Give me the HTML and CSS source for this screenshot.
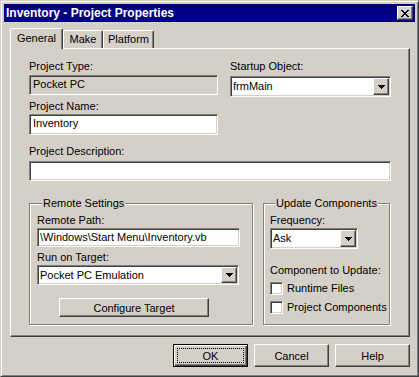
FILE: index.html
```html
<!DOCTYPE html>
<html lang="en">
<head>
    <meta charset="UTF-8">
    <meta name="viewport" content="width=device-width, initial-scale=1.0">
    <title>Inventory - Project Properties</title>
    <link rel="stylesheet" href="styles.css">
</head>
<body>
    <div class="window">
        <div class="title-bar">
            <span class="title-text">Inventory - Project Properties</span>
            <div class="close-btn raised">
                <svg width="8" height="7" viewBox="0 0 8 7" shape-rendering="crispEdges">
                    <path d="M0 0h2v1H0zM6 0h2v1H6zM1 1h2v1H1zM5 1h2v1H5zM2 2h4v1H2zM3 3h2v1H3zM2 4h4v1H2zM1 5h2v1H1zM5 5h2v1H5zM0 6h2v1H0zM6 6h2v1H6z" fill="#000"/>
                </svg>
            </div>
        </div>

        <div class="tabs">
            <div class="tab tab-general active">General</div>
            <div class="tab tab-make">Make</div>
            <div class="tab tab-platform">Platform</div>
        </div>

        <div class="panel">
            <div class="top-row">
                <div class="col-left">
                    <div class="label">Project Type:</div>
                    <div class="field readonly first-field">Pocket PC</div>
                    <div class="label name-label">Project Name:</div>
                    <div class="field name-field">Inventory</div>
                </div>
                <div class="col-right">
                    <div class="label">Startup Object:</div>
                    <div class="combo startup-combo">
                        <span class="combo-text">frmMain</span>
                        <span class="drop-btn raised">
                            <svg width="7" height="4" viewBox="0 0 7 4" shape-rendering="crispEdges"><path d="M0 0h7v1H0zM1 1h5v1H1zM2 2h3v1H2zM3 3h1v1H3z" fill="#000"/></svg>
                        </span>
                    </div>
                </div>
            </div>

            <div class="label desc-label">Project Description:</div>
            <div class="field desc-field"></div>

            <div class="groups">
                <fieldset class="group remote-group">
                    <legend>Remote Settings</legend>
                    <div class="label">Remote Path:</div>
                    <div class="field path-field">\Windows\Start Menu\Inventory.vb</div>
                    <div class="label spaced">Run on Target:</div>
                    <div class="combo target-combo">
                        <span class="combo-text">Pocket PC Emulation</span>
                        <span class="drop-btn raised">
                            <svg width="7" height="4" viewBox="0 0 7 4" shape-rendering="crispEdges"><path d="M0 0h7v1H0zM1 1h5v1H1zM2 2h3v1H2zM3 3h1v1H3z" fill="#000"/></svg>
                        </span>
                    </div>
                    <div class="button raised configure-btn">Configure Target</div>
                </fieldset>

                <fieldset class="group update-group">
                    <legend>Update Components</legend>
                    <div class="label">Frequency:</div>
                    <div class="combo freq-combo">
                        <span class="combo-text">Ask</span>
                        <span class="drop-btn raised">
                            <svg width="7" height="4" viewBox="0 0 7 4" shape-rendering="crispEdges"><path d="M0 0h7v1H0zM1 1h5v1H1zM2 2h3v1H2zM3 3h1v1H3z" fill="#000"/></svg>
                        </span>
                    </div>
                    <div class="label component-label">Component to Update:</div>
                    <div class="check-row first-check"><span class="checkbox"></span>Runtime Files</div>
                    <div class="check-row"><span class="checkbox"></span>Project Components</div>
                </fieldset>
            </div>
        </div>

        <div class="dialog-buttons">
            <div class="button default-btn"><span class="focus">OK</span></div>
            <div class="button raised">Cancel</div>
            <div class="button raised">Help</div>
        </div>
    </div>
</body>
</html>
```

FILE: styles.css
```css
/* Global Reset */
* {
    margin: 0;
    padding: 0;
    box-sizing: border-box;
}

body {
    font-family: 'Liberation Sans', Arial, sans-serif;
    font-size: 11px;
    color: #000;
    background: #d4d0c8;
}

/* Window frame */
.window {
    width: 419px;
    height: 377px;
    background: #d4d0c8;
    border: 1px solid;
    border-color: #d4d0c8 #404040 #404040 #d4d0c8;
    box-shadow: inset 1px 1px #fff, inset -1px -1px #808080;
    padding: 3px;
    display: flex;
    flex-direction: column;
}

.title-bar {
    height: 18px;
    background: #000080;
    color: #fff;
    display: flex;
    align-items: center;
    justify-content: space-between;
    padding: 0 2px;
}

.title-text {
    font-weight: bold;
    font-size: 12px;
}

/* 3D raised look shared by buttons */
.raised {
    background: #d4d0c8;
    border: 1px solid;
    border-color: #fff #404040 #404040 #fff;
    box-shadow: inset -1px -1px #808080;
}

.close-btn {
    width: 16px;
    height: 14px;
    display: flex;
    align-items: center;
    justify-content: center;
}

/* Tabs */
.tabs {
    display: flex;
    align-items: flex-end;
    margin: 6px 5px 0 6px;
    height: 20px;
}

.tab {
    height: 18px;
    line-height: 13px;
    padding-top: 2px;
    text-align: center;
    border-top: 1px solid #fff;
    border-left: 1px solid #fff;
    border-right: 1px solid #404040;
    box-shadow: inset -1px 0 #808080;
    border-radius: 2px 2px 0 0;
    background: #d4d0c8;
}

.tab.active {
    height: 21px;
    margin-bottom: -1px;
    padding-top: 3px;
    position: relative;
    z-index: 1;
}

.tab-general { width: 53px; }
.tab-make { width: 40px; }
.tab-platform { width: 51px; }

/* Tab page */
.panel {
    height: 289px;
    margin: 0 5px 0 6px;
    border: 1px solid;
    border-color: #fff #404040 #404040 #fff;
    box-shadow: inset -1px -1px #808080;
    padding: 11px 18px 0 18px;
}

.label {
    line-height: 13px;
    white-space: nowrap;
}

.top-row {
    display: flex;
    gap: 12px;
}

.col-left {
    width: 189px;
}

.col-right {
    width: 161px;
}

/* Sunken edit fields */
.field {
    height: 20px;
    line-height: 17px;
    padding: 0 3px;
    background: #fff;
    border: 1px solid;
    border-color: #808080 #fff #fff #808080;
    box-shadow: inset 1px 1px #404040, inset -1px -1px #d4d0c8;
    white-space: nowrap;
    overflow: hidden;
}

.field.readonly {
    background: #d4d0c8;
}

.first-field { margin-top: 2px; }
.name-label { margin-top: 5px; }
.name-field { margin-top: 1px; height: 21px; }

.desc-label { margin-top: 10px; }
.desc-field { margin-top: 3px; }

/* Combo boxes */
.combo {
    height: 21px;
    display: flex;
    padding: 1px;
    background: #fff;
    border: 1px solid;
    border-color: #808080 #fff #fff #808080;
    box-shadow: inset 1px 1px #404040, inset -1px -1px #d4d0c8;
}

.combo-text {
    flex: 1;
    line-height: 17px;
    padding-left: 1px;
    white-space: nowrap;
}

.drop-btn {
    width: 16px;
    display: flex;
    align-items: center;
    justify-content: center;
}

.startup-combo { margin-top: 3px; }

/* Group boxes */
.groups {
    display: flex;
    gap: 10px;
    margin-top: 16px;
}

.group {
    border: 1px solid #808080;
    box-shadow: 1px 1px #fff, inset 1px 1px #fff;
    padding: 4px 0 7px 7px;
    min-width: 0;
}

.group legend {
    margin-left: 5px;
    padding: 0 1px;
    line-height: 13px;
    background: #d4d0c8;
}

.remote-group { width: 224px; }
.update-group { width: 127px; padding-left: 6px; }

.path-field {
    width: 203px;
    height: 19px;
    margin-top: 1px;
    padding-left: 2px;
}

.spaced { margin-top: 4px; }

.target-combo {
    width: 202px;
    height: 20px;
    margin-top: 1px;
}

.freq-combo {
    width: 88px;
    margin-top: 1px;
}

.component-label { margin-top: 15px; }

.check-row {
    display: flex;
    align-items: center;
    gap: 4px;
    line-height: 13px;
    margin-top: 6px;
    white-space: nowrap;
}

.check-row.first-check { margin-top: 5px; }

.checkbox {
    width: 13px;
    height: 13px;
    background: #fff;
    border: 1px solid;
    border-color: #808080 #fff #fff #808080;
    box-shadow: inset 1px 1px #404040, inset -1px -1px #d4d0c8;
}

/* Push buttons */
.button {
    width: 75px;
    height: 23px;
    display: flex;
    align-items: center;
    justify-content: center;
}

.configure-btn {
    width: 150px;
    height: 19px;
    margin: 13px 0 0 22px;
}

.dialog-buttons {
    display: flex;
    justify-content: flex-end;
    gap: 6px;
    margin: 7px 5px 0 0;
}

/* Default button gets an extra black frame */
.default-btn {
    background: #d4d0c8;
    border: 1px solid #000;
    box-shadow: inset 1px 1px #fff, inset -1px -1px #404040, inset -2px -2px #808080;
}

.focus {
    width: 67px;
    height: 15px;
    border: 1px dotted #000;
    display: flex;
    align-items: center;
    justify-content: center;
}
```
